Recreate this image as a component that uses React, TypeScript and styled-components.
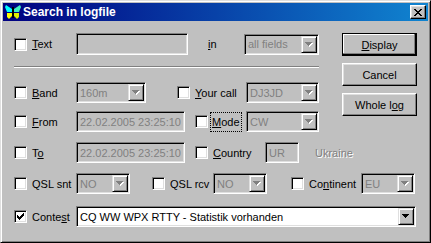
import React from 'react'
import styled, { createGlobalStyle } from 'styled-components'

const face = '#c0c0c0'
const shadow = '#808080'
const light = '#dfdfdf'

const GlobalStyle = createGlobalStyle`
  html, body {
    margin: 0;
    padding: 0;
    background: ${face};
  }
  body {
    font-family: "Liberation Sans", Arial, sans-serif;
    font-size: 11px;
    color: #000;
  }
`

const Window = styled.div`
  box-sizing: border-box;
  width: 431px;
  height: 243px;
  padding: 2px;
  background: ${face};
  border: 1px solid;
  border-color: ${light} #000 #000 ${light};
  box-shadow: inset 1px 1px #fff, inset -1px -1px ${shadow};
`

const TitleBar = styled.div`
  display: flex;
  align-items: center;
  height: 18px;
  padding: 0 2px;
  background: linear-gradient(to right, #000080, #1084d0);
  color: #fff;
  font-weight: bold;
  font-size: 12px;
`

const Title = styled.span`
  margin-left: 2px;
  flex: 1;
`

const CloseButton = styled.div`
  box-sizing: border-box;
  width: 16px;
  height: 14px;
  display: flex;
  align-items: center;
  justify-content: center;
  background: ${face};
  border: 1px solid;
  border-color: #fff #000 #000 #fff;
  box-shadow: inset -1px -1px ${shadow}, inset 1px 1px ${light};
`

const Client = styled.div`
  padding: 12px 0 0 11px;
`

const TopArea = styled.div`
  display: flex;
  align-items: flex-start;
`

const FormColumn = styled.div`
  display: flex;
  flex-direction: column;
  width: 305px;
`

const ButtonColumn = styled.div`
  display: flex;
  flex-direction: column;
  gap: 7px;
  margin-left: 23px;
`

const Row = styled.div<{ $mt?: number; $h?: number }>`
  display: flex;
  align-items: center;
  height: ${p => p.$h ?? 21}px;
  margin-top: ${p => p.$mt ?? 0}px;
  white-space: nowrap;
`

const Separator = styled.div`
  width: 305px;
  margin-top: 11px;
  border-top: 1px solid ${shadow};
  border-bottom: 1px solid #fff;
`

const CheckField = styled.label<{ $w: number; $ml?: number }>`
  display: flex;
  align-items: center;
  flex: none;
  gap: 5px;
  width: ${p => p.$w}px;
  margin-left: ${p => p.$ml ?? 0}px;
`

const Box = styled.span`
  box-sizing: border-box;
  display: flex;
  align-items: center;
  justify-content: center;
  flex: none;
  width: 13px;
  height: 13px;
  background: #fff;
  border: 1px solid;
  border-color: ${shadow} #fff #fff ${shadow};
  box-shadow: inset 1px 1px #000, inset -1px -1px ${light};
`

const FocusLabel = styled.span`
  margin-left: -3px;
  padding: 0 1px;
  height: 18px;
  line-height: 18px;
  border: 1px dotted #000;
`

const Acc = styled.span`
  text-decoration: underline;
`

const Sunken = styled.div<{ $w: number; $h?: number; $ml?: number; $enabled?: boolean }>`
  box-sizing: border-box;
  display: flex;
  align-items: center;
  flex: none;
  width: ${p => p.$w}px;
  height: ${p => p.$h ?? 21}px;
  margin-left: ${p => p.$ml ?? 0}px;
  padding: 1px;
  background: ${p => (p.$enabled ? '#fff' : face)};
  color: ${p => (p.$enabled ? '#000' : shadow)};
  border: 1px solid;
  border-color: ${shadow} #fff #fff ${shadow};
  box-shadow: inset 1px 1px #000, inset -1px -1px ${light};
  overflow: hidden;
`

const FieldText = styled.span`
  flex: 1;
  padding-left: 2px;
  overflow: hidden;
`

const ArrowButton = styled.span`
  box-sizing: border-box;
  display: flex;
  align-items: center;
  justify-content: center;
  flex: none;
  width: 16px;
  height: 100%;
  background: ${face};
  border: 1px solid;
  border-color: ${light} #000 #000 ${light};
  box-shadow: inset 1px 1px #fff, inset -1px -1px ${shadow};
`

const Static = styled.span<{ $w?: number; $ml?: number; $dim?: boolean }>`
  flex: none;
  width: ${p => (p.$w ? `${p.$w}px` : 'auto')};
  margin-left: ${p => p.$ml ?? 0}px;
  color: ${p => (p.$dim ? shadow : '#000')};
  text-shadow: ${p => (p.$dim ? '1px 1px #fff' : 'none')};
`

const Button = styled.button<{ $default?: boolean }>`
  box-sizing: border-box;
  width: 75px;
  height: 23px;
  padding: 0;
  font-family: "Liberation Sans", Arial, sans-serif;
  font-size: 11px;
  color: #000;
  background: ${face};
  border: 1px solid;
  border-color: ${p => (p.$default ? '#000' : '#fff #000 #000 #fff')};
  box-shadow: ${p =>
    p.$default
      ? `inset -1px -1px #000, inset -2px -2px ${shadow}, inset 1px 1px #fff`
      : `inset -1px -1px ${shadow}, inset 1px 1px ${light}`};
`

const Butterfly = () => (
  <svg width="16" height="16" viewBox="0 0 16 16">
    <polygon points="7,5 1,1 0,3 2,8 7,8" fill="#00ffff" />
    <polygon points="7,9 2,9 2,13 4,15 7,12" fill="#ffff00" />
    <polygon points="9,5 15,1 16,3 14,8 9,8" fill="#40f0c0" />
    <polygon points="9,9 14,9 14,13 12,15 9,12" fill="#e0f000" />
    <rect x="7" y="3" width="2" height="11" fill="#000" />
  </svg>
)

const CloseGlyph = () => (
  <svg width="8" height="7" viewBox="0 0 8 7" shapeRendering="crispEdges">
    <path d="M0 0h2v1H0zM6 0h2v1H6zM1 1h2v1H1zM5 1h2v1H5zM2 2h4v1H2zM3 3h2v1H3zM2 4h4v1H2zM1 5h2v1H1zM5 5h2v1H5zM0 6h2v1H0zM6 6h2v1H6z" fill="#000" />
  </svg>
)

const CheckMark = () => (
  <svg width="7" height="7" viewBox="0 0 7 7" shapeRendering="crispEdges">
    <path d="M0 2h1v3H0zM1 3h1v3H1zM2 4h1v3H2zM3 3h1v3H3zM4 2h1v3H4zM5 1h1v3H5zM6 0h1v3H6z" fill="#000" />
  </svg>
)

const Arrow = ({ enabled }: { enabled?: boolean }) => (
  <svg width="8" height="5" viewBox="0 0 8 5" shapeRendering="crispEdges">
    {!enabled && <path d="M1 1h7v1H1zM2 2h5v1H2zM3 3h3v1H3zM4 4h1v1H4z" fill="#fff" />}
    <path d="M0 0h7v1H0zM1 1h5v1H1zM2 2h3v1H2zM3 3h1v1H3z" fill={enabled ? '#000' : shadow} />
  </svg>
)

const Check = ({ w, ml, checked, children }: { w: number; ml?: number; checked?: boolean; children: React.ReactNode }) => (
  <CheckField $w={w} $ml={ml}>
    <Box>{checked && <CheckMark />}</Box>
    {children}
  </CheckField>
)

const Combo = ({ w, ml, value, enabled }: { w: number; ml?: number; value: string; enabled?: boolean }) => (
  <Sunken $w={w} $ml={ml} $enabled={enabled}>
    <FieldText>{value}</FieldText>
    <ArrowButton>
      <Arrow enabled={enabled} />
    </ArrowButton>
  </Sunken>
)

const Edit = ({ w, h, ml, value }: { w: number; h?: number; ml?: number; value?: string }) => (
  <Sunken $w={w} $h={h} $ml={ml}>
    <FieldText>{value}</FieldText>
  </Sunken>
)

const App = () => (
  <>
    <GlobalStyle />
    <Window>
      <TitleBar>
        <Butterfly />
        <Title>Search in logfile</Title>
        <CloseButton>
          <CloseGlyph />
        </CloseButton>
      </TitleBar>
      <Client>
        <TopArea>
          <FormColumn>
            <Row $h={22}>
              <Check w={62}>
                <span><Acc>T</Acc>ext</span>
              </Check>
              <Edit w={112} h={22} />
              <Static $w={36} $ml={20}><Acc>i</Acc>n</Static>
              <Combo w={75} value="all fields" />
            </Row>
            <Separator />
            <Row $mt={14}>
              <Check w={62}>
                <span><Acc>B</Acc>and</span>
              </Check>
              <Combo w={70} value="160m" />
              <Check w={69} ml={31}>
                <span><Acc>Y</Acc>our call</span>
              </Check>
              <Combo w={73} value="DJ3JD" />
            </Row>
            <Row $mt={8}>
              <Check w={62}>
                <span><Acc>F</Acc>rom</span>
              </Check>
              <Edit w={109} value="22.02.2005 23:25:10" />
              <Check w={51} ml={10}>
                <FocusLabel><Acc>M</Acc>ode</FocusLabel>
              </Check>
              <Combo w={73} value="CW" />
            </Row>
            <Row $mt={10}>
              <Check w={62}>
                <span>T<Acc>o</Acc></span>
              </Check>
              <Edit w={109} value="22.02.2005 23:25:10" />
              <Check w={70} ml={10}>
                <span><Acc>C</Acc>ountry</span>
              </Check>
              <Edit w={34} value="UR" />
              <Static $ml={16} $dim>Ukraine</Static>
            </Row>
          </FormColumn>
          <ButtonColumn>
            <Button $default><Acc>D</Acc>isplay</Button>
            <Button>Cancel</Button>
            <Button>Whole l<Acc>o</Acc>g</Button>
          </ButtonColumn>
        </TopArea>
        <Row $mt={10}>
          <Check w={62}>
            <span>QSL snt</span>
          </Check>
          <Combo w={54} value="NO" />
          <Check w={61} ml={22}>
            <span>QSL rcv</span>
          </Check>
          <Combo w={54} value="NO" />
          <Check w={70} ml={24}>
            <span>Co<Acc>n</Acc>tinent</span>
          </Check>
          <Combo w={54} value="EU" />
        </Row>
        <Row $mt={12}>
          <Check w={62} checked>
            <span>Conte<Acc>s</Acc>t</span>
          </Check>
          <Combo w={340} value="CQ WW WPX RTTY - Statistik vorhanden" enabled />
        </Row>
      </Client>
    </Window>
  </>
)

export default App
